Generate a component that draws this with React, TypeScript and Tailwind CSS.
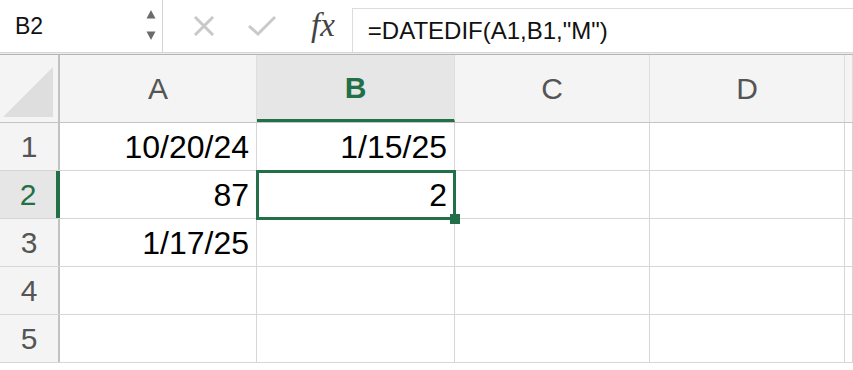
import React from 'react'

const cols = ['A', 'B', 'C', 'D', '']
const colW = ['w-[197px]', 'w-[198px]', 'w-[195px]', 'w-[195px]', 'flex-1']

const rows: string[][] = [
    ['10/20/24', '1/15/25', '', '', ''],
    ['87', '2', '', '', ''],
    ['1/17/25', '', '', '', ''],
    ['', '', '', '', ''],
    ['', '', '', '', ''],
]

const Toolbar = () => (
    <div className="flex h-[52px] items-stretch bg-white">
        <div className="relative flex w-[163px] items-center border-r border-[#d4d4d4] pl-[15px]">
            <span className="text-[23px] text-[#111]">B2</span>
            <div className="absolute right-[6px] top-[9px] flex flex-col gap-[12px]">
                <svg width="10" height="10" viewBox="0 0 10 10"><path d="M5 1 L9.5 9.5 L0.5 9.5 Z" fill="#6b6b6b" /></svg>
                <svg width="10" height="10" viewBox="0 0 10 10"><path d="M0.5 0.5 L9.5 0.5 L5 9 Z" fill="#6b6b6b" /></svg>
            </div>
        </div>
        <div className="flex items-center pl-[30px]">
            <svg width="22" height="20" viewBox="0 0 22 20">
                <path d="M2 1 L20 19 M20 1 L2 19" stroke="#c9c9c9" strokeWidth="3" />
            </svg>
        </div>
        <div className="flex items-center pl-[32px]">
            <svg width="30" height="22" viewBox="0 0 30 22">
                <path d="M2 11 L11 19 L28 2" stroke="#c9c9c9" strokeWidth="3" fill="none" />
            </svg>
        </div>
        <div className="flex items-center pl-[34px] pr-[17px]">
            <span className="text-[33px] italic text-[#444]" style={{ fontFamily: '"Liberation Serif", serif' }}>fx</span>
        </div>
        <div className="mt-[8px] flex flex-1 items-center border-l border-t border-[#dcdcdc] pl-[15px]">
            <span className="text-[24px] text-[#111]">=DATEDIF(A1,B1,"M")</span>
        </div>
    </div>
)

export default function App() {
    return (
        <div className="h-[370px] w-[853px] overflow-hidden bg-white" style={{ fontFamily: '"Liberation Sans", Arial, sans-serif' }}>
            <Toolbar />
            <div className="h-[3px] border-t border-[#d6d6d6] border-b border-b-[#b5b5b5] bg-[#ececec]" />

            {/* column headers */}
            <div className="flex h-[68px] border-b border-[#c4c4c4] bg-[#f4f4f4]">
                <div className="relative w-[60px] shrink-0 border-r-2 border-[#c2c2c2]">
                    <svg className="absolute bottom-[5px] right-[5px]" width="50" height="50" viewBox="0 0 50 50">
                        <path d="M50 0 L50 50 L0 50 Z" fill="#dedede" />
                    </svg>
                </div>
                {cols.map((c, i) => (
                    <div
                        key={i}
                        className={`${colW[i]} flex shrink-0 items-center justify-center border-r border-[#dedede] text-[30px] ${c === 'B' ? 'border-b-[3px] border-b-[#237048] bg-[#e6e6e6] font-bold text-[#237048]' : 'text-[#555]'}`}
                    >
                        {c}
                    </div>
                ))}
            </div>

            {/* rows */}
            {rows.map((r, ri) => (
                <div key={ri} className="flex h-[48px] border-b border-[#d6d6d6]">
                    <div className={`flex w-[60px] shrink-0 items-center justify-center border-r-2 text-[30px] ${ri === 1 ? 'border-[#237048] border-r-4 bg-[#e6e6e6] text-[#237048]' : 'border-[#c2c2c2] bg-[#f4f4f4] text-[#555]'}`}>
                        {ri + 1}
                    </div>
                    {r.map((v, ci) => (
                        <div key={ci} className={`${colW[ci]} relative flex shrink-0 items-center justify-end border-r border-[#d6d6d6] pr-[7px] text-[32px] text-black ${ri === 1 && ci === 1 ? 'z-10' : ''}`}>
                            {v}
                            {ri === 1 && ci === 1 && (
                                <>
                                    <div className="absolute -left-px -top-px bottom-[-2px] right-[-2px] border-[3px] border-[#237048]" />
                                    <div className="absolute bottom-[-6px] right-[-6px] h-[10px] w-[10px] bg-[#237048]" />
                                </>
                            )}
                        </div>
                    ))}
                </div>
            ))}
        </div>
    )
}
